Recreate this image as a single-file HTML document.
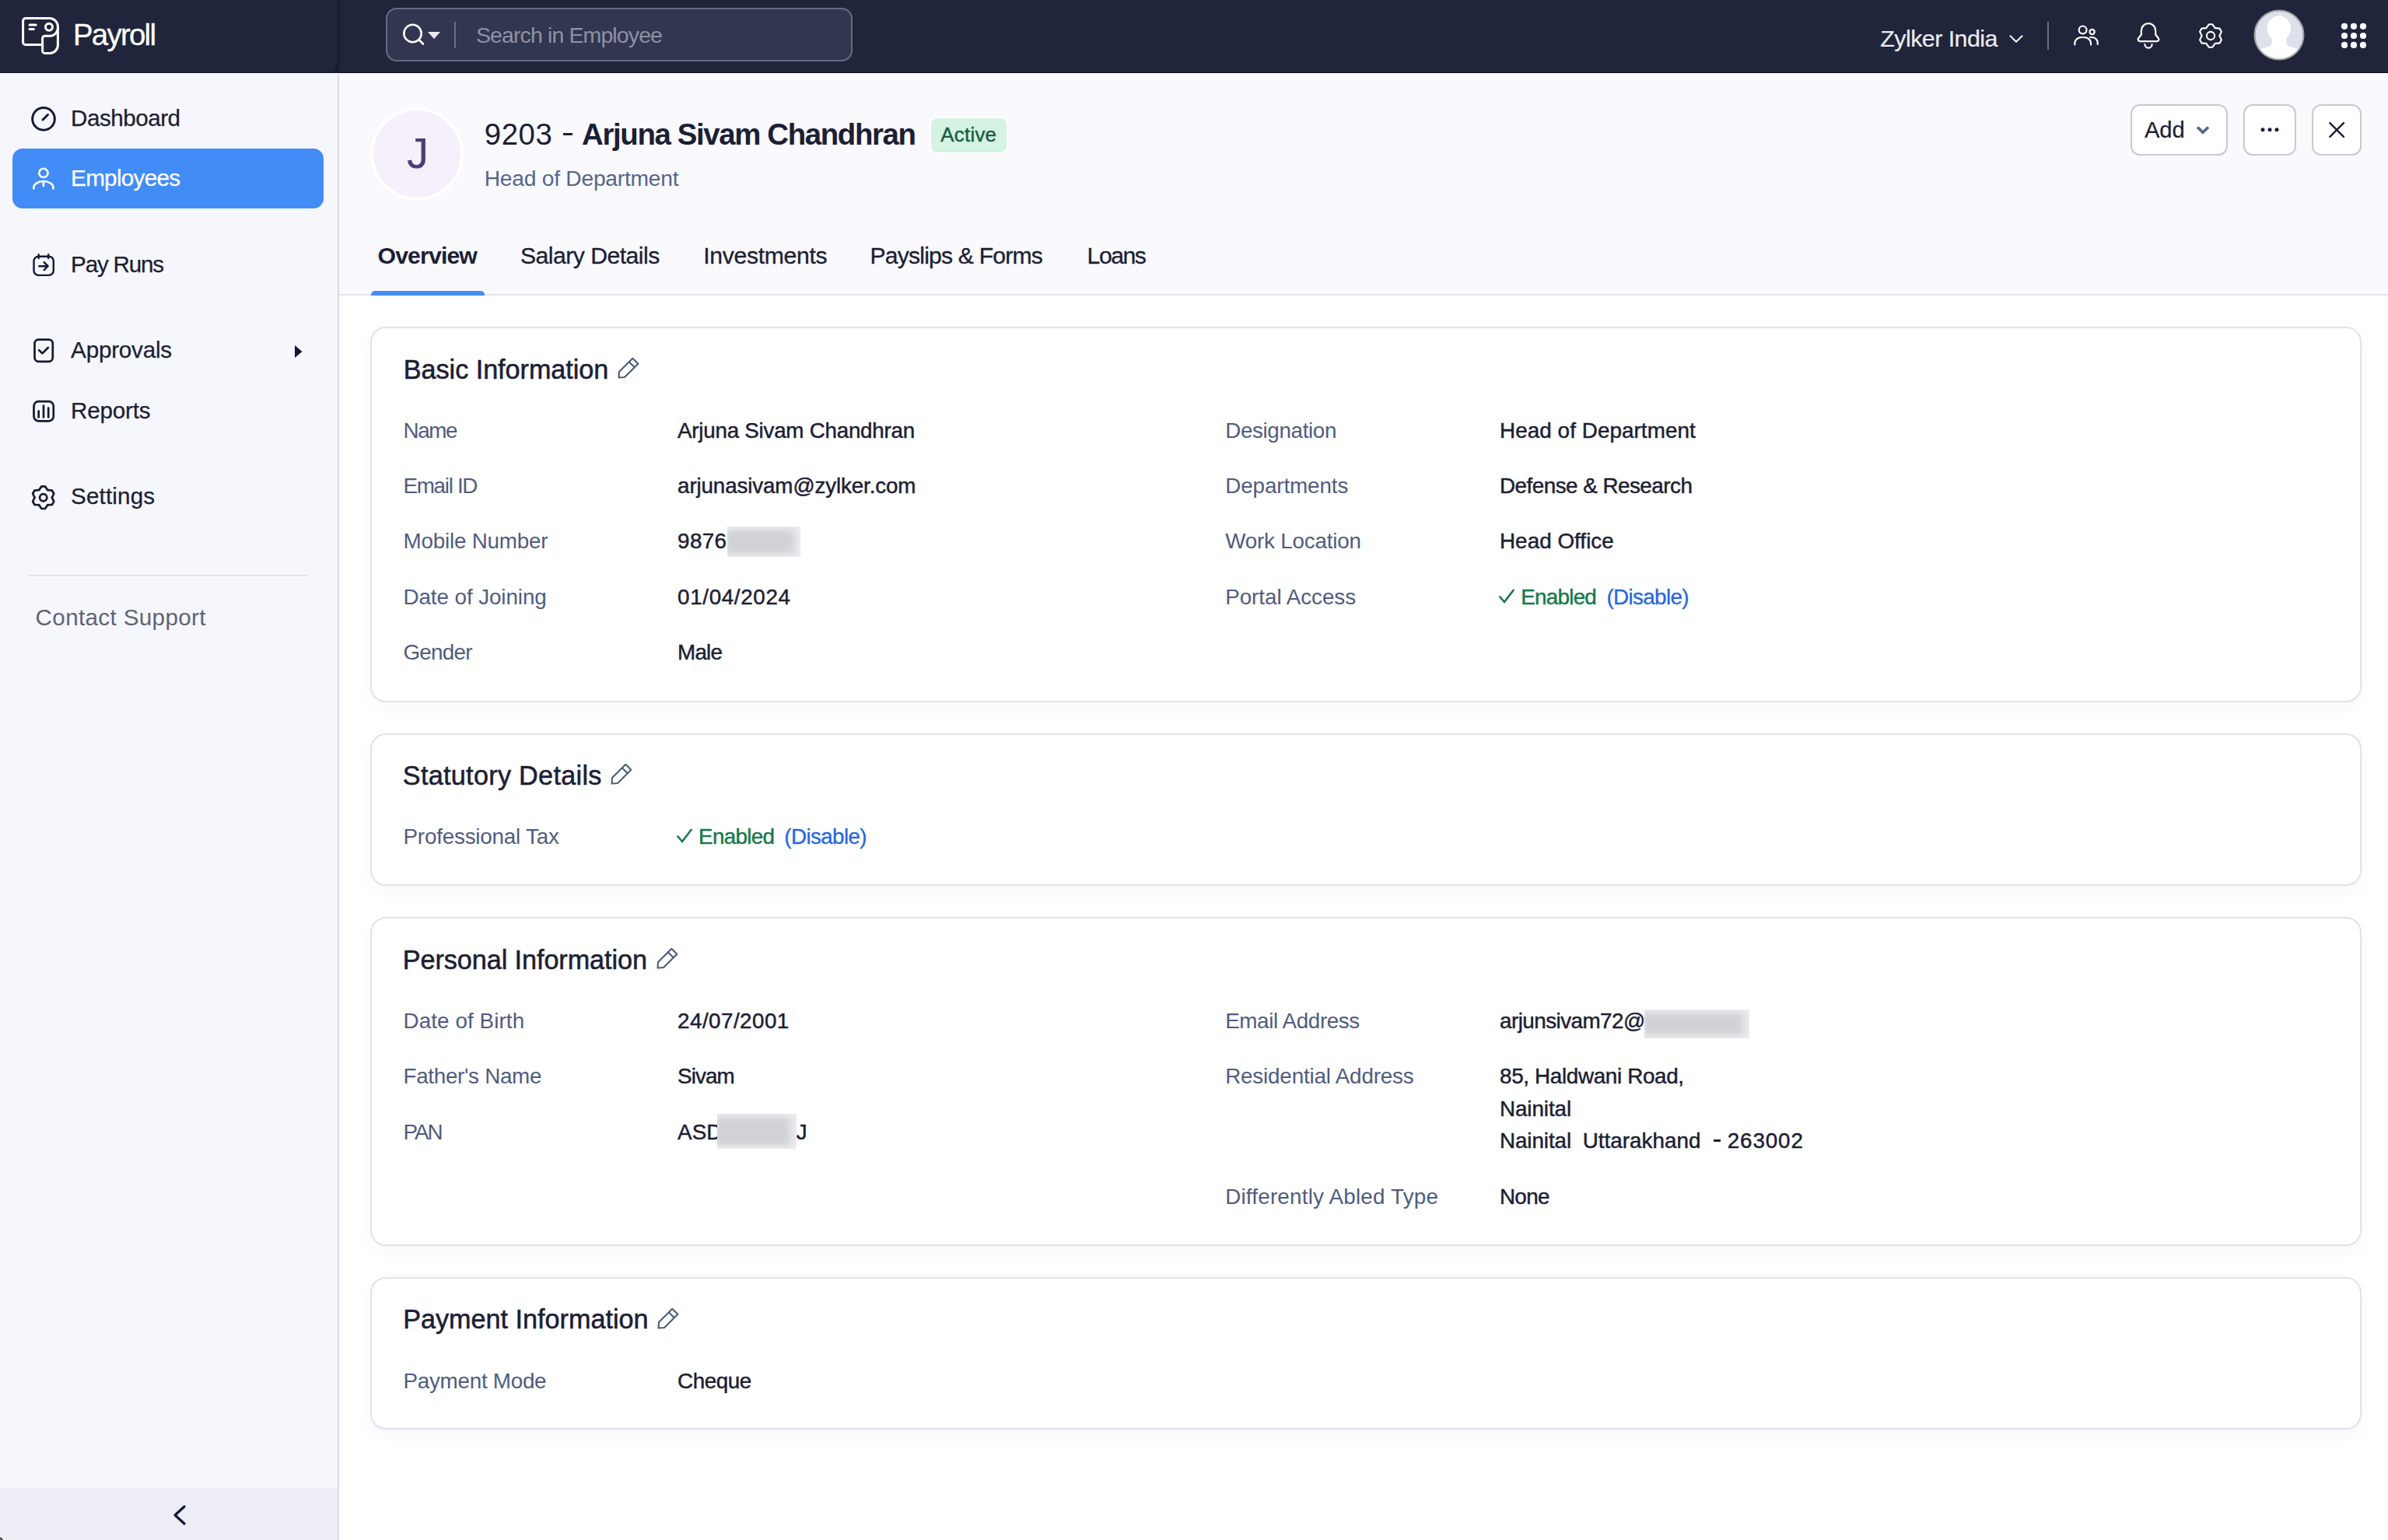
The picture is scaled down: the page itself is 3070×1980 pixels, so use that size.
<!DOCTYPE html>
<html><head><meta charset="utf-8"><title>Payroll</title>
<style>
html,body{margin:0;padding:0;}
body{width:3070px;height:1980px;overflow:hidden;position:relative;background:#ffffff;font-family:"Liberation Sans",sans-serif;}
.t{position:absolute;white-space:pre;line-height:1;}
.b{position:absolute;}
</style></head><body>
<div class="b" style="left:0px;top:0px;width:3070px;height:94px;background:#21253b;box-shadow:inset 0 -1px 0 #0d1024;"></div>
<div class="b" style="left:0px;top:0px;width:435px;height:94px;background:#1b1e31;"></div>
<div class="b" style="left:0px;top:0px;width:434px;height:93px;background:#21253b;border-bottom-right-radius:16px;"></div>
<div class="b" style="left:434px;top:0px;width:2px;height:93px;background:#1a1c2c;"></div>
<div class="b" style="left:0px;top:94px;width:3070px;height:1px;background:#ffffff;"></div>
<svg class="b" style="left:26px;top:20px" width="52" height="52" viewBox="26 20 52 52" fill="none" stroke="#fff" stroke-width="3" stroke-linecap="round" stroke-linejoin="round">
<path d="M54.6 57.4 H32.6 a3 3 0 0 1 -3 -3 V26.6 a3 3 0 0 1 3 -3 H63.8 a10.6 10.6 0 0 1 10.6 10.6 V58 a10.4 10.4 0 0 1 -10.4 10.4 H57.6 a3 3 0 0 1 -3 -3 V49.3 a3 3 0 0 1 3 -3 H63.8 a10.6 10.6 0 0 0 10.6 -10.6"/>
<circle cx="63" cy="34.8" r="4.5"/>
<path d="M38 31.9 H46.2 M38 37.6 H43.4"/>
</svg>
<div class="t" style="left:94.00px;top:26.00px;font-size:38.4px;color:#ffffff;letter-spacing:-1.733px;-webkit-text-stroke:0.3px #ffffff;">Payroll</div>
<div class="b" style="left:496px;top:10px;width:600px;height:69px;box-sizing:border-box;border:2px solid #686b80;background:#333650;border-radius:14px;"></div>
<svg class="b" style="left:510px;top:24px" width="64" height="44" viewBox="510 24 64 44" fill="none" stroke="#fff" stroke-width="2.6" stroke-linecap="round">
<circle cx="530.5" cy="43" r="11.2"/><path d="M538.6 51.2 L544 56.5"/>
<path d="M550 41 H566 L558 50 Z" fill="#e8e8ee" stroke="none"/>
</svg>
<div class="b" style="left:584px;top:28px;width:2px;height:34px;background:#6a6d82;"></div>
<div class="t" style="left:611.90px;top:31.00px;font-size:28.5px;color:#8e91a7;letter-spacing:-0.882px;">Search in Employee</div>
<div class="t" style="left:2417.30px;top:34.00px;font-size:30.4px;color:#ececf2;letter-spacing:-0.536px;-webkit-text-stroke:0.2px #ececf2;">Zylker India</div>
<svg class="b" style="left:2580px;top:40px" width="24" height="20" viewBox="2580 40 24 20" fill="none" stroke="#ececf2" stroke-width="2.2" stroke-linecap="round" stroke-linejoin="round"><path d="M2584.5 46.3 L2592 53.8 L2599.5 46.3"/></svg>
<div class="b" style="left:2632px;top:28px;width:2px;height:36px;background:#6a6d82;"></div>
<svg class="b" style="left:2660px;top:26px" width="44" height="36" viewBox="2660 26 44 36" fill="none" stroke="#fff" stroke-width="2.2" stroke-linecap="round">
<circle cx="2677.6" cy="38.4" r="4.9"/><circle cx="2689.6" cy="41" r="3.1"/>
<path d="M2667.3 57.5 V55.5 a9 7.5 0 0 1 9 -7.5 H2679 a9 7.5 0 0 1 9 7.5 V57.5"/>
<path d="M2687 48 H2689.5 a7.2 7 0 0 1 7.2 7 V57"/>
</svg>
<svg class="b" style="left:2744px;top:26px" width="36" height="40" viewBox="2744 26 36 40" fill="none" stroke="#fff" stroke-width="2.2" stroke-linecap="round" stroke-linejoin="round">
<path d="M2762 30.2 a9.2 9.2 0 0 0 -9.2 9.2 V44.5 L2749.3 49 a2.4 2.4 0 0 0 1.8 4.1 H2772.9 a2.4 2.4 0 0 0 1.8 -4.1 L2771.2 44.5 V39.4 a9.2 9.2 0 0 0 -9.2 -9.2 Z"/>
<path d="M2757.4 57 a4.6 4.6 0 0 0 9.2 0"/>
</svg>
<svg class="b" style="left:2820px;top:24px" width="44" height="44" viewBox="2820 24 44 44" fill="none" stroke="#fff" stroke-width="2.1" stroke-linejoin="round">
<circle cx="2842" cy="46" r="5.1"/><path d="M2839.67 31.28 L2844.33 31.28 L2847.07 35.12 Q2847.35 36.73 2848.88 36.17 L2853.58 36.62 L2855.91 40.66 L2853.95 44.95 Q2852.70 46.00 2853.95 47.05 L2855.91 51.34 L2853.58 55.38 L2848.88 55.83 Q2847.35 55.27 2847.07 56.88 L2844.33 60.72 L2839.67 60.72 L2836.93 56.88 Q2836.65 55.27 2835.12 55.83 L2830.42 55.38 L2828.09 51.34 L2830.05 47.05 Q2831.30 46.00 2830.05 44.95 L2828.09 40.66 L2830.42 36.62 L2835.12 36.17 Q2836.65 36.73 2836.93 35.12 L2839.67 31.28 Z"/></svg>
<svg class="b" style="left:2896px;top:11px" width="68" height="68" viewBox="2896 11 68 68">
<defs><clipPath id="avc"><circle cx="2930" cy="45" r="31"/></clipPath></defs>
<circle cx="2930" cy="45" r="31" fill="#dde1ec"/>
<g clip-path="url(#avc)" fill="#ffffff">
<ellipse cx="2929.8" cy="36.5" rx="15.2" ry="16.2"/>
<path d="M2920.5 45 L2920.5 56.5 Q2919.5 59.5 2909 62 Q2899 64.5 2896 76 V80 H2964 V76 Q2961 64.5 2951 62 Q2940.5 59.5 2939.5 56.5 L2939.5 45 Z"/>
</g>
<circle cx="2930" cy="45" r="31.5" fill="none" stroke="#a3a3a6" stroke-width="2"/>
</svg>
<svg class="b" style="left:3000px;top:20px" width="52" height="52" viewBox="3000 20 52 52" fill="#fff"><circle cx="3014" cy="33.8" r="4.1"/><circle cx="3014" cy="46" r="4.1"/><circle cx="3014" cy="57.9" r="4.1"/><circle cx="3026" cy="33.8" r="4.1"/><circle cx="3026" cy="46" r="4.1"/><circle cx="3026" cy="57.9" r="4.1"/><circle cx="3038" cy="33.8" r="4.1"/><circle cx="3038" cy="46" r="4.1"/><circle cx="3038" cy="57.9" r="4.1"/></svg>
<div class="b" style="left:0px;top:95px;width:434px;height:1885px;background:#f6f7fc;"></div>
<div class="b" style="left:434px;top:95px;width:2px;height:1885px;background:#dcdce0;"></div>
<div class="b" style="left:16px;top:191px;width:400px;height:77px;background:#428cf7;border-radius:13px;"></div>
<svg class="b" style="left:36px;top:132px" width="40" height="40" viewBox="36 132 40 40" fill="none" stroke="#141a33" stroke-width="3" stroke-linecap="round">
<circle cx="56" cy="152.9" r="14.3"/><path d="M55 154 L61.5 147.5"/></svg>
<svg class="b" style="left:38px;top:212px" width="36" height="36" viewBox="38 212 36 36" fill="none" stroke="#fff" stroke-width="2.6" stroke-linecap="round">
<circle cx="55.9" cy="222.4" r="5.6"/><path d="M43.4 242.5 V241 a12.5 8 0 0 1 25 0 V242.5 M55.9 233.5 V239"/></svg>
<svg class="b" style="left:38px;top:322px" width="36" height="38" viewBox="38 322 36 38" fill="none" stroke="#141a33" stroke-width="2.4" stroke-linecap="round" stroke-linejoin="round">
<rect x="43.5" y="329.7" width="25.3" height="24.2" rx="6"/><path d="M49.7 327.3 V332 M62.2 327.3 V332 M50.3 342.2 H61.5 M56.6 337.2 L61.6 342.2 L56.6 347.2"/></svg>
<svg class="b" style="left:38px;top:430px" width="36" height="40" viewBox="38 430 36 40" fill="none" stroke="#141a33" stroke-width="2.7" stroke-linecap="round" stroke-linejoin="round">
<rect x="44.5" y="436.6" width="23.3" height="28.2" rx="5"/><path d="M50.2 450.2 L54.4 454.4 L61.8 447"/></svg>
<svg class="b" style="left:38px;top:510px" width="36" height="36" viewBox="38 510 36 36" fill="none" stroke="#141a33" stroke-width="2.7" stroke-linecap="round" stroke-linejoin="round">
<rect x="43.5" y="516.2" width="25.3" height="25.1" rx="6"/><path d="M49.7 528.5 V536.5 M56 521.5 V536.5 M62.2 524.5 V536.5"/></svg>
<svg class="b" style="left:34px;top:618px" width="44" height="44" viewBox="34 618 44 44" fill="none" stroke="#141a33" stroke-width="2.7" stroke-linejoin="round">
<circle cx="55.7" cy="639.7" r="4.6"/><path d="M53.43 625.38 L57.97 625.38 L60.64 629.10 Q60.90 630.69 62.41 630.12 L66.97 630.57 L69.24 634.50 L67.36 638.68 Q66.10 639.70 67.36 640.72 L69.24 644.90 L66.97 648.83 L62.41 649.28 Q60.90 648.71 60.64 650.30 L57.97 654.02 L53.43 654.02 L50.76 650.30 Q50.50 648.71 48.99 649.28 L44.43 648.83 L42.16 644.90 L44.04 640.72 Q45.30 639.70 44.04 638.68 L42.16 634.50 L44.43 630.57 L48.99 630.12 Q50.50 630.69 50.76 629.10 L53.43 625.38 Z"/></svg>
<svg class="b" style="left:374px;top:440px" width="20" height="24" viewBox="374 440 20 24"><path d="M379 444 L388.5 452 L379 460 Z" fill="#141a33"/></svg>
<div class="t" style="left:91.10px;top:137.00px;font-size:29.6px;color:#1b2034;letter-spacing:-0.488px;-webkit-text-stroke:0.25px #1b2034;">Dashboard</div>
<div class="t" style="left:91.10px;top:325.00px;font-size:29.6px;color:#1b2034;letter-spacing:-1.186px;-webkit-text-stroke:0.25px #1b2034;">Pay Runs</div>
<div class="t" style="left:91.10px;top:435.00px;font-size:29.6px;color:#1b2034;letter-spacing:-0.200px;-webkit-text-stroke:0.25px #1b2034;">Approvals</div>
<div class="t" style="left:91.10px;top:513.00px;font-size:29.6px;color:#1b2034;letter-spacing:-0.200px;-webkit-text-stroke:0.25px #1b2034;">Reports</div>
<div class="t" style="left:91.10px;top:623.00px;font-size:29.6px;color:#1b2034;letter-spacing:0.143px;-webkit-text-stroke:0.25px #1b2034;">Settings</div>
<div class="t" style="left:91.10px;top:214.00px;font-size:29.6px;color:#ffffff;letter-spacing:-0.688px;-webkit-text-stroke:0.25px #ffffff;">Employees</div>
<div class="b" style="left:36px;top:739px;width:358px;height:2px;background:#e3e4ea;"></div>
<div class="t" style="left:45.60px;top:779.00px;font-size:29.6px;color:#5f6378;letter-spacing:0.357px;">Contact Support</div>
<div class="b" style="left:0px;top:1914px;width:434px;height:66px;background:#ededf6;"></div>
<svg class="b" style="left:216px;top:1930px" width="30" height="36" viewBox="216 1930 30 36" fill="none" stroke="#141a33" stroke-width="3.2" stroke-linecap="round" stroke-linejoin="round"><path d="M237 1937 L225 1948 L237 1959"/></svg>
<div class="b" style="left:436px;top:95px;width:2634px;height:284px;background:#f9f9fe;"></div>
<div class="b" style="left:436px;top:378px;width:2634px;height:2px;background:#e4e4ee;"></div>
<div class="b" style="left:477px;top:374px;width:146px;height:6px;background:#428cf7;border-radius:5px 5px 0 0;"></div>
<div class="b" style="left:476px;top:137.7px;width:120px;height:120px;border-radius:50%;background:#ffffff;"></div>
<div class="b" style="left:480px;top:141.7px;width:112px;height:112px;border-radius:50%;background:#f5f0fb;"></div>
<div class="t" style="left:523.10px;top:169.00px;font-size:56px;color:#4f3b7a;-webkit-text-stroke:0.1px #4f3b7a;">J</div>
<div class="t" style="left:622.70px;top:154.00px;font-size:38.4px;color:#1b2034;letter-spacing:0.600px;">9203</div>
<div class="b" style="left:723.7px;top:170.6px;width:12.299999999999955px;height:3.4000000000000057px;background:#1b2034;"></div>
<div class="t" style="left:748.10px;top:154.00px;font-size:38.4px;color:#1b2034;letter-spacing:-1.367px;font-weight:700;">Arjuna Sivam Chandhran</div>
<div class="b" style="left:1197px;top:152px;width:97px;height:44px;background:#d4f3e3;border-radius:8px;box-shadow:0 0 0 2px #ffffff;"></div>
<div class="t" style="left:1209.30px;top:161.00px;font-size:25.9px;color:#175f3e;letter-spacing:0.240px;-webkit-text-stroke:0.45px #175f3e;">Active</div>
<div class="t" style="left:622.70px;top:215.00px;font-size:28.2px;color:#56658a;letter-spacing:-0.235px;">Head of Department</div>
<div class="b" style="left:2739px;top:134px;width:125px;height:66px;box-sizing:border-box;border:2px solid #c9c9ce;border-radius:12px;background:#fff;"></div>
<div class="t" style="left:2756.90px;top:153.00px;font-size:29.2px;color:#1b2034;letter-spacing:-0.050px;-webkit-text-stroke:0.2px #1b2034;">Add</div>
<svg class="b" style="left:2818px;top:156px" width="26" height="22" viewBox="2818 156 26 22" fill="none" stroke="#58648c" stroke-width="3.6" stroke-linecap="butt" stroke-linejoin="miter"><path d="M2825 163.5 L2832 170.3 L2839 163.5"/></svg>
<div class="b" style="left:2884px;top:134px;width:68px;height:66px;box-sizing:border-box;border:2px solid #c9c9ce;border-radius:12px;background:#fff;"></div>
<svg class="b" style="left:2900px;top:160px" width="36" height="14" viewBox="2900 160 36 14" fill="#1b2034"><circle cx="2909" cy="166.8" r="2.5"/><circle cx="2918" cy="166.8" r="2.5"/><circle cx="2927" cy="166.8" r="2.5"/></svg>
<div class="b" style="left:2972px;top:134px;width:64px;height:66px;box-sizing:border-box;border:2px solid #c9c9ce;border-radius:12px;background:#fff;"></div>
<svg class="b" style="left:2988px;top:151px" width="32" height="32" viewBox="2988 151 32 32" fill="none" stroke="#1b2034" stroke-width="2.4" stroke-linecap="round"><path d="M2995.3 158.2 L3013 175.9 M3013 158.2 L2995.3 175.9"/></svg>
<div class="t" style="left:485.50px;top:314.00px;font-size:30.2px;color:#1b2034;letter-spacing:-0.843px;font-weight:700;">Overview</div>
<div class="t" style="left:669.00px;top:314.00px;font-size:30.2px;color:#1b2034;letter-spacing:-0.538px;-webkit-text-stroke:0.3px #1b2034;">Salary Details</div>
<div class="t" style="left:904.20px;top:314.00px;font-size:30.2px;color:#1b2034;letter-spacing:-0.340px;-webkit-text-stroke:0.3px #1b2034;">Investments</div>
<div class="t" style="left:1118.50px;top:314.00px;font-size:30.2px;color:#1b2034;letter-spacing:-0.827px;-webkit-text-stroke:0.3px #1b2034;">Payslips &amp; Forms</div>
<div class="t" style="left:1397.60px;top:314.00px;font-size:30.2px;color:#1b2034;letter-spacing:-1.475px;-webkit-text-stroke:0.3px #1b2034;">Loans</div>
<svg class="b" style="left:0px;top:1972px" width="10" height="8" viewBox="0 1972 10 8"><path d="M0 1975.5 L5 1980 H0 Z" fill="#000" stroke="#fff" stroke-width="0.8"/></svg>
<div class="b" style="left:476px;top:420px;width:2560px;height:483px;box-sizing:border-box;border:2px solid #e3e1ef;border-radius:20px;background:#fff;box-shadow:0 6px 22px rgba(40,40,80,0.04);"></div>
<div class="t" style="left:518.80px;top:458.00px;font-size:34.2px;color:#1b2034;letter-spacing:-0.037px;-webkit-text-stroke:0.55px #1b2034;">Basic Information</div>
<svg class="b" style="left:792.0px;top:460.1px" width="32" height="32" viewBox="0 0 32 32" fill="none" stroke="#4d5a7c" stroke-width="2.1" stroke-linejoin="round"><path d="M3.5 25.5 L4 18 L21.3 0.8 L28.3 7.8 L11 25 Z M16.8 5.3 L23.8 12.3"/></svg>
<div class="t" style="left:518.50px;top:540.00px;font-size:27.8px;color:#4f5c80;letter-spacing:-1.367px;">Name</div>
<div class="t" style="left:871.10px;top:540.00px;font-size:27.8px;color:#1b2034;letter-spacing:-0.262px;-webkit-text-stroke:0.45px #1b2034;">Arjuna Sivam Chandhran</div>
<div class="t" style="left:518.50px;top:611.00px;font-size:27.8px;color:#4f5c80;letter-spacing:-1.300px;">Email ID</div>
<div class="t" style="left:871.10px;top:611.00px;font-size:27.8px;color:#1b2034;letter-spacing:-0.143px;-webkit-text-stroke:0.45px #1b2034;">arjunasivam@zylker.com</div>
<div class="t" style="left:518.50px;top:682.00px;font-size:27.8px;color:#4f5c80;letter-spacing:-0.208px;">Mobile Number</div>
<div class="t" style="left:871.10px;top:682.00px;font-size:27.8px;color:#1b2034;letter-spacing:0.367px;-webkit-text-stroke:0.45px #1b2034;">9876</div>
<div class="b" style="left:935px;top:677px;width:94px;height:39px;background:#d1d2d6;box-shadow:inset 0 8px 9px -4px #ededf0, inset 0 -8px 9px -4px #ededf0, inset -12px 0 12px -5px #efeff1;"></div>
<div class="t" style="left:518.50px;top:754.00px;font-size:27.8px;color:#4f5c80;letter-spacing:-0.086px;">Date of Joining</div>
<div class="t" style="left:871.10px;top:754.00px;font-size:27.8px;color:#1b2034;letter-spacing:0.644px;-webkit-text-stroke:0.45px #1b2034;">01/04/2024</div>
<div class="t" style="left:518.50px;top:825.00px;font-size:27.8px;color:#4f5c80;letter-spacing:-0.760px;">Gender</div>
<div class="t" style="left:871.10px;top:825.00px;font-size:27.8px;color:#1b2034;letter-spacing:-0.800px;-webkit-text-stroke:0.45px #1b2034;">Male</div>
<div class="t" style="left:1575.20px;top:540.00px;font-size:27.8px;color:#4f5c80;letter-spacing:-0.360px;">Designation</div>
<div class="t" style="left:1928.00px;top:540.00px;font-size:27.8px;color:#1b2034;letter-spacing:0.082px;-webkit-text-stroke:0.45px #1b2034;">Head of Department</div>
<div class="t" style="left:1575.20px;top:611.00px;font-size:27.8px;color:#4f5c80;letter-spacing:-0.100px;">Departments</div>
<div class="t" style="left:1928.00px;top:611.00px;font-size:27.8px;color:#1b2034;letter-spacing:-0.506px;-webkit-text-stroke:0.45px #1b2034;">Defense &amp; Research</div>
<div class="t" style="left:1575.20px;top:682.00px;font-size:27.8px;color:#4f5c80;letter-spacing:-0.208px;">Work Location</div>
<div class="t" style="left:1928.00px;top:682.00px;font-size:27.8px;color:#1b2034;letter-spacing:0.050px;-webkit-text-stroke:0.45px #1b2034;">Head Office</div>
<div class="t" style="left:1575.20px;top:754.00px;font-size:27.8px;color:#4f5c80;letter-spacing:-0.042px;">Portal Access</div>
<svg class="b" style="left:1924.7px;top:754.6px" width="26" height="26" viewBox="0 0 26 26" fill="none" stroke="#17794a" stroke-width="2.6" stroke-linecap="square"><path d="M3.5 12.5 L9 19 L20.5 4"/></svg>
<div class="t" style="left:1955.30px;top:754.00px;font-size:27.8px;color:#17794a;letter-spacing:-0.750px;-webkit-text-stroke:0.45px #17794a;">Enabled</div>
<div class="t" style="left:2065.50px;top:754.00px;font-size:27.8px;color:#2468df;letter-spacing:-0.650px;-webkit-text-stroke:0.3px #2468df;">(Disable)</div>
<div class="b" style="left:476px;top:943px;width:2560px;height:196px;box-sizing:border-box;border:2px solid #e3e1ef;border-radius:20px;background:#fff;box-shadow:0 6px 22px rgba(40,40,80,0.04);"></div>
<div class="t" style="left:517.80px;top:980.00px;font-size:34.2px;color:#1b2034;letter-spacing:0.300px;-webkit-text-stroke:0.55px #1b2034;">Statutory Details</div>
<svg class="b" style="left:783.0px;top:982.1px" width="32" height="32" viewBox="0 0 32 32" fill="none" stroke="#4d5a7c" stroke-width="2.1" stroke-linejoin="round"><path d="M3.5 25.5 L4 18 L21.3 0.8 L28.3 7.8 L11 25 Z M16.8 5.3 L23.8 12.3"/></svg>
<div class="t" style="left:518.50px;top:1062.00px;font-size:27.8px;color:#4f5c80;letter-spacing:-0.200px;">Professional Tax</div>
<svg class="b" style="left:867.9px;top:1062.5px" width="26" height="26" viewBox="0 0 26 26" fill="none" stroke="#17794a" stroke-width="2.6" stroke-linecap="square"><path d="M3.5 12.5 L9 19 L20.5 4"/></svg>
<div class="t" style="left:898.10px;top:1062.00px;font-size:27.8px;color:#17794a;letter-spacing:-0.700px;-webkit-text-stroke:0.45px #17794a;">Enabled</div>
<div class="t" style="left:1008.30px;top:1062.00px;font-size:27.8px;color:#2468df;letter-spacing:-0.613px;-webkit-text-stroke:0.3px #2468df;">(Disable)</div>
<div class="b" style="left:476px;top:1179px;width:2560px;height:423px;box-sizing:border-box;border:2px solid #e3e1ef;border-radius:20px;background:#fff;box-shadow:0 6px 22px rgba(40,40,80,0.04);"></div>
<div class="t" style="left:517.80px;top:1217.00px;font-size:34.2px;color:#1b2034;letter-spacing:-0.068px;-webkit-text-stroke:0.55px #1b2034;">Personal Information</div>
<svg class="b" style="left:842.0px;top:1219.2px" width="32" height="32" viewBox="0 0 32 32" fill="none" stroke="#4d5a7c" stroke-width="2.1" stroke-linejoin="round"><path d="M3.5 25.5 L4 18 L21.3 0.8 L28.3 7.8 L11 25 Z M16.8 5.3 L23.8 12.3"/></svg>
<div class="t" style="left:518.50px;top:1299.00px;font-size:27.8px;color:#4f5c80;letter-spacing:0.092px;">Date of Birth</div>
<div class="t" style="left:871.10px;top:1299.00px;font-size:27.8px;color:#1b2034;letter-spacing:0.456px;-webkit-text-stroke:0.45px #1b2034;">24/07/2001</div>
<div class="t" style="left:518.50px;top:1370.00px;font-size:27.8px;color:#4f5c80;letter-spacing:-0.292px;">Father's Name</div>
<div class="t" style="left:871.10px;top:1370.00px;font-size:27.8px;color:#1b2034;letter-spacing:-0.925px;-webkit-text-stroke:0.45px #1b2034;">Sivam</div>
<div class="t" style="left:518.50px;top:1442.00px;font-size:27.8px;color:#4f5c80;letter-spacing:-2.050px;">PAN</div>
<div class="t" style="left:871.10px;top:1442.00px;font-size:27.8px;color:#1b2034;-webkit-text-stroke:0.45px #1b2034;">ASD</div>
<div class="t" style="left:1023.70px;top:1442.00px;font-size:27.8px;color:#1b2034;-webkit-text-stroke:0.45px #1b2034;">J</div>
<div class="b" style="left:922px;top:1432px;width:102px;height:45px;background:#d1d2d6;box-shadow:inset 0 8px 9px -4px #ededf0, inset 0 -8px 9px -4px #ededf0, inset -12px 0 12px -5px #efeff1;"></div>
<div class="t" style="left:1575.20px;top:1299.00px;font-size:27.8px;color:#4f5c80;letter-spacing:-0.383px;">Email Address</div>
<div class="t" style="left:1928.00px;top:1299.00px;font-size:27.8px;color:#1b2034;letter-spacing:-0.533px;-webkit-text-stroke:0.45px #1b2034;">arjunsivam72@</div>
<div class="b" style="left:2114px;top:1298px;width:135px;height:37px;background:#d1d2d6;box-shadow:inset 0 8px 9px -4px #ededf0, inset 0 -8px 9px -4px #ededf0, inset -12px 0 12px -5px #efeff1;"></div>
<div class="t" style="left:1575.20px;top:1370.00px;font-size:27.8px;color:#4f5c80;letter-spacing:-0.178px;">Residential Address</div>
<div class="t" style="left:1928.00px;top:1370.00px;font-size:27.8px;color:#1b2034;letter-spacing:-0.329px;-webkit-text-stroke:0.45px #1b2034;">85, Haldwani Road,</div>
<div class="t" style="left:1928.00px;top:1412.00px;font-size:27.8px;color:#1b2034;letter-spacing:-0.086px;-webkit-text-stroke:0.45px #1b2034;">Nainital</div>
<div class="t" style="left:1928.00px;top:1453.00px;font-size:27.8px;color:#1b2034;letter-spacing:-0.086px;-webkit-text-stroke:0.45px #1b2034;">Nainital</div>
<div class="t" style="left:2034.70px;top:1453.00px;font-size:27.8px;color:#1b2034;letter-spacing:0.040px;-webkit-text-stroke:0.45px #1b2034;">Uttarakhand</div>
<div class="b" style="left:2203px;top:1465px;width:8.599999999999909px;height:2.7999999999999545px;background:#1b2034;"></div>
<div class="t" style="left:2220.80px;top:1453.00px;font-size:27.8px;color:#1b2034;letter-spacing:0.860px;-webkit-text-stroke:0.45px #1b2034;">263002</div>
<div class="t" style="left:1575.20px;top:1525.00px;font-size:27.8px;color:#4f5c80;letter-spacing:0.210px;">Differently Abled Type</div>
<div class="t" style="left:1928.00px;top:1525.00px;font-size:27.8px;color:#1b2034;letter-spacing:-0.700px;-webkit-text-stroke:0.45px #1b2034;">None</div>
<div class="b" style="left:476px;top:1642px;width:2560px;height:196px;box-sizing:border-box;border:2px solid #e3e1ef;border-radius:20px;background:#fff;box-shadow:0 6px 22px rgba(40,40,80,0.04);"></div>
<div class="t" style="left:518.20px;top:1679.00px;font-size:34.2px;color:#1b2034;letter-spacing:-0.006px;-webkit-text-stroke:0.55px #1b2034;">Payment Information</div>
<svg class="b" style="left:843.2px;top:1681.6px" width="32" height="32" viewBox="0 0 32 32" fill="none" stroke="#4d5a7c" stroke-width="2.1" stroke-linejoin="round"><path d="M3.5 25.5 L4 18 L21.3 0.8 L28.3 7.8 L11 25 Z M16.8 5.3 L23.8 12.3"/></svg>
<div class="t" style="left:518.50px;top:1762.00px;font-size:27.8px;color:#4f5c80;letter-spacing:-0.264px;">Payment Mode</div>
<div class="t" style="left:871.10px;top:1762.00px;font-size:27.8px;color:#1b2034;letter-spacing:-0.440px;-webkit-text-stroke:0.45px #1b2034;">Cheque</div>
</body></html>
